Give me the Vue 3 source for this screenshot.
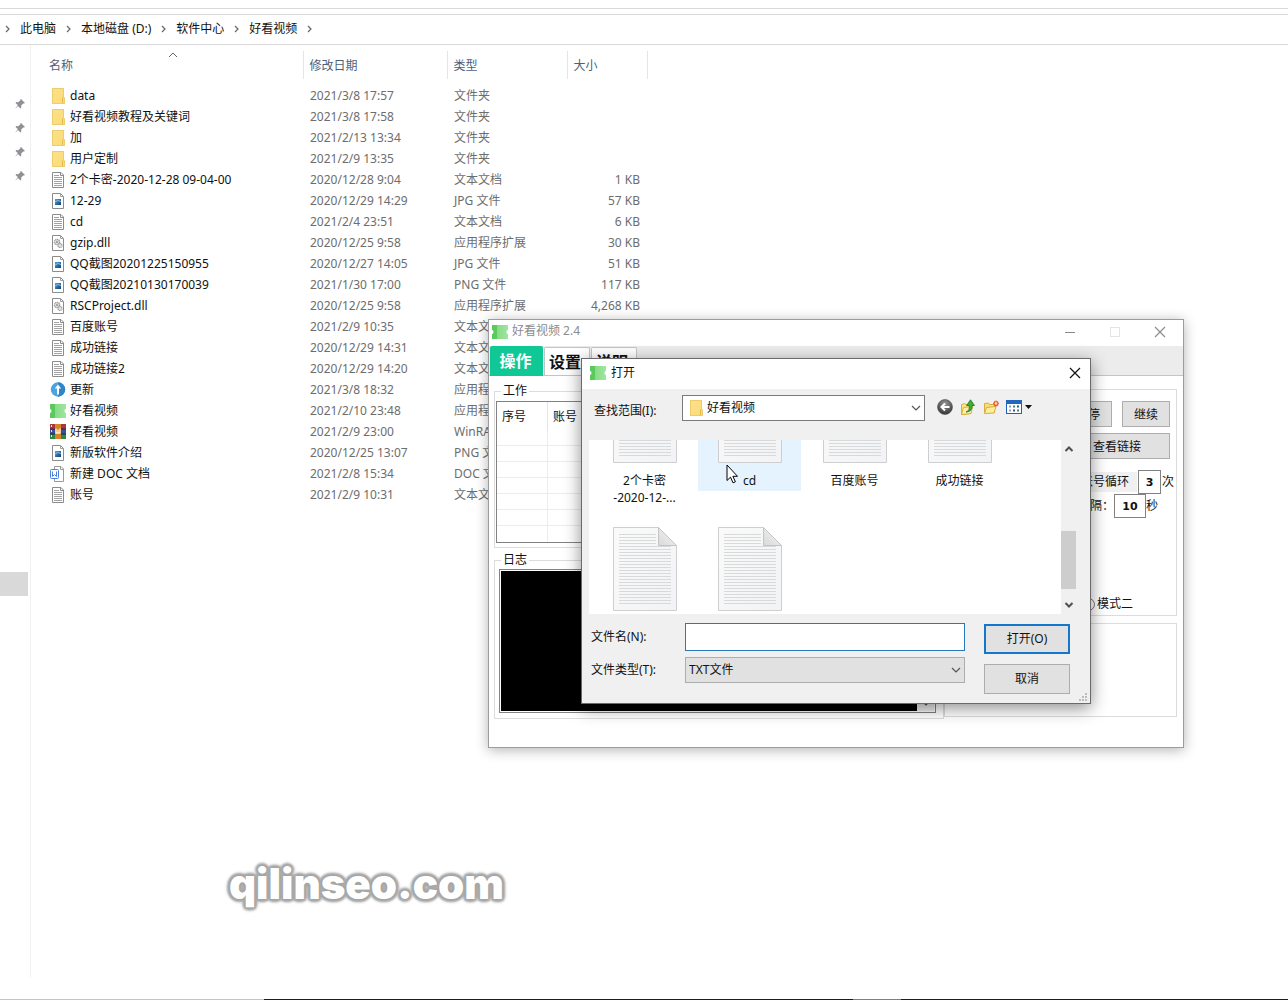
<script setup>
import { ref } from 'vue'

const crumbs = ['此电脑', '本地磁盘 (D:)', '软件中心', '好看视频']

const files = [
  { icon: 'folder', name: 'data', date: '2021/3/8 17:57', type: '文件夹', size: '' },
  { icon: 'folder', name: '好看视频教程及关键词', date: '2021/3/8 17:58', type: '文件夹', size: '' },
  { icon: 'folder', name: '加', date: '2021/2/13 13:34', type: '文件夹', size: '' },
  { icon: 'folder', name: '用户定制', date: '2021/2/9 13:35', type: '文件夹', size: '' },
  { icon: 'text', name: '2个卡密-2020-12-28 09-04-00', date: '2020/12/28 9:04', type: '文本文档', size: '1 KB' },
  { icon: 'image', name: '12-29', date: '2020/12/29 14:29', type: 'JPG 文件', size: '57 KB' },
  { icon: 'text', name: 'cd', date: '2021/2/4 23:51', type: '文本文档', size: '6 KB' },
  { icon: 'dll', name: 'gzip.dll', date: '2020/12/25 9:58', type: '应用程序扩展', size: '30 KB' },
  { icon: 'image', name: 'QQ截图20201225150955', date: '2020/12/27 14:05', type: 'JPG 文件', size: '51 KB' },
  { icon: 'image', name: 'QQ截图20210130170039', date: '2021/1/30 17:00', type: 'PNG 文件', size: '117 KB' },
  { icon: 'dll', name: 'RSCProject.dll', date: '2020/12/25 9:58', type: '应用程序扩展', size: '4,268 KB' },
  { icon: 'text', name: '百度账号', date: '2021/2/9 10:35', type: '文本文档', size: '' },
  { icon: 'text', name: '成功链接', date: '2020/12/29 14:31', type: '文本文档', size: '' },
  { icon: 'text', name: '成功链接2', date: '2020/12/29 14:20', type: '文本文档', size: '' },
  { icon: 'update', name: '更新', date: '2021/3/8 18:32', type: '应用程序', size: '' },
  { icon: 'app', name: '好看视频', date: '2021/2/10 23:48', type: '应用程序', size: '' },
  { icon: 'rar', name: '好看视频', date: '2021/2/9 23:00', type: 'WinRAR', size: '' },
  { icon: 'image', name: '新版软件介绍', date: '2020/12/25 13:07', type: 'PNG 文件', size: '' },
  { icon: 'doc', name: '新建 DOC 文档', date: '2021/2/8 15:34', type: 'DOC 文档', size: '' },
  { icon: 'text', name: '账号', date: '2021/2/9 10:31', type: '文本文档', size: '' },
]

const picks = [
  { label: ['2个卡密', '-2020-12-...'] },
  { label: ['cd'], hover: true },
  { label: ['百度账号'] },
  { label: ['成功链接'] },
  { label: [] },
  { label: [] },
]

const fileName = ref('')
const loops = ref('3')
const pause = ref('10')
</script>

<template>
  <svg class="defs" aria-hidden="true">
    <defs>
      <linearGradient id="gFolder" x1="0" y1="0" x2="1" y2="1">
        <stop offset="0" stop-color="#fbe08c" />
        <stop offset="1" stop-color="#fddc74" />
      </linearGradient>
      <linearGradient id="gPaper" x1="0" y1="0" x2="1" y2="1">
        <stop offset="0" stop-color="#fafafa" />
        <stop offset="1" stop-color="#f2f3f5" />
      </linearGradient>
      <linearGradient id="gFold" x1="0" y1="1" x2="1" y2="0">
        <stop offset="0" stop-color="#d9d9d9" />
        <stop offset="1" stop-color="#f6f6f6" />
      </linearGradient>
      <linearGradient id="gPic" x1="0" y1="0" x2="1" y2="1">
        <stop offset="0" stop-color="#4aa3dc" />
        <stop offset="1" stop-color="#10407c" />
      </linearGradient>
      <linearGradient id="gApp" x1="0" y1="0" x2="1" y2="0">
        <stop offset="0" stop-color="#86dc86" />
        <stop offset="1" stop-color="#9fe69f" />
      </linearGradient>
      <radialGradient id="gBack" cx=".5" cy=".3" r=".7">
        <stop offset="0" stop-color="#9a9a9a" />
        <stop offset="1" stop-color="#333" />
      </radialGradient>
      <symbol id="i-folder" viewBox="0 0 16 16">
        <path d="M2 0h12v10h1v6H2z" fill="url(#gFolder)" />
        <path d="M2.500.500h11v9h1v6h-12z" fill="none" stroke="#edcc6c" />
        <path d="M12.500 9.500v5.500" stroke="#e3b94f" fill="none" />
      </symbol>
      <symbol id="i-text" viewBox="0 0 16 16">
        <path d="M2.500.500h8.500l2.500 2.500v12.500h-11z" fill="#fff" stroke="#8b8b8b" />
        <path d="M10.500.500v3h3" fill="none" stroke="#8b8b8b" />
        <path d="M4 3.500h5M4 5.500h8M4 7.500h8M4 9.500h8M4 11.500h8M4 13.500h8" stroke="#a2a2a2" />
      </symbol>
      <symbol id="i-image" viewBox="0 0 16 16">
        <path d="M2.500.500h8l3 3v12h-11z" fill="#fff" stroke="#8b8b8b" />
        <path d="M10.500.500v3h3" fill="none" stroke="#a0a0a0" />
        <rect x="5" y="6" width="6" height="6" fill="url(#gPic)" />
        <path d="M5 9l3-1.500 3 1" stroke="#9fd0ee" fill="none" stroke-width=".8" />
      </symbol>
      <symbol id="i-dll" viewBox="0 0 16 16">
        <path d="M2.500.500h8l3 3v12h-11z" fill="#fff" stroke="#8b8b8b" />
        <path d="M10.500.500v3h3" fill="none" stroke="#a0a0a0" />
        <circle cx="7" cy="7" r="2.600" fill="#e6e6e6" stroke="#999" stroke-dasharray="1.200 .5" stroke-width="1.400" />
        <circle cx="10" cy="10.500" r="2" fill="#e6e6e6" stroke="#999" stroke-dasharray="1 .4" stroke-width="1.200" />
        <circle cx="7" cy="7" r=".9" fill="#888" />
      </symbol>
      <symbol id="i-update" viewBox="0 0 16 16">
        <circle cx="8" cy="7.500" r="7.200" fill="#4aa5df" />
        <path d="M8 .3a7.200 7.200 0 0 1 0 14.400z" fill="#2f86c4" />
        <path d="M8 2.500L4.800 6.500h2.200v6h2v-6h2.200z" fill="#fff" />
      </symbol>
      <symbol id="i-app" viewBox="0 0 16 16">
        <path d="M0 1h5v14H0v-5a1.500 2 0 0 0 0-4z" fill="#5cc95c" />
        <path d="M5 1h11v5a1.500 2 0 0 0 0 4v5H5z" fill="url(#gApp)" />
      </symbol>
      <symbol id="i-rar" viewBox="0 0 16 16">
        <rect width="16" height="5" fill="#a53a3a" />
        <rect width="16" height="5" y="5" fill="#39509c" />
        <rect width="16" height="5" y="10" fill="#2f8746" />
        <path d="M0 5h16M0 10h16" stroke="#2a2340" />
        <rect x="5" width="6" height="15" fill="#d9822b" />
        <path d="M6 4.500v4.500h4V4.500M8 5.500v3.500" fill="none" stroke="#fff3d0" stroke-width="1.300" />
        <path d="M1.500 1v2M1.500 6v2M1.500 11v2" stroke="#f0e8d0" />
      </symbol>
      <symbol id="i-doc" viewBox="0 0 16 16">
        <path d="M4.500.500h6.500l2.500 2.500v12.500h-9z" fill="#fff" stroke="#9a9a9a" />
        <path d="M10.500.500v3h3" fill="none" stroke="#9a9a9a" />
        <rect x=".5" y="3.500" width="8" height="9" rx="1" fill="#fff" stroke="#4c7fd8" />
        <path d="M2.500 5.500v5l2-2 2 2v-5" stroke="#4c7fd8" fill="none" />
      </symbol>
      <symbol id="i-page" viewBox="0 0 64 84">
        <path d="M.5.500h45l18 18v65H.5z" fill="url(#gPaper)" stroke="#cfcfd2" />
        <path d="M6 7.500h37M6 10.500h37M6 13.500h37M6 16.500h37M6 19.500h52M6 22.500h52M6 25.500h52M6 28.500h52M6 31.500h52M6 34.500h52M6 37.500h52M6 40.500h52M6 43.500h52M6 46.500h52M6 49.500h52M6 52.500h52M6 55.500h52M6 58.500h52M6 61.500h52M6 64.500h52M6 67.500h52M6 70.500h52M6 73.500h52M6 76.500h52" stroke="#d8d9db" />
        <path d="M45.500.500v18h18z" fill="url(#gFold)" stroke="#c4c4c4" />
      </symbol>
      <symbol id="i-pin" viewBox="0 0 12 12">
        <path d="M7 1l4 4-1 .6-.8-.1-2 2 .1 2-.9.9-2.400-2.400L1 11l2.800-3.900L1.500 5l.9-.9 2 .1 2-2-.1-.6z" fill="#8d9196" />
      </symbol>
      <symbol id="i-down" viewBox="0 0 10 6">
        <path d="M1 1l4 4 4-4" fill="none" stroke="#555" stroke-width="1.200" />
      </symbol>
      <symbol id="i-close" viewBox="0 0 12 12">
        <path d="M1 1l10 10M11 1L1 11" fill="none" stroke="currentColor" stroke-width="1.200" />
      </symbol>
    </defs>
  </svg>

  <main class="desktop">
    <section class="explorer">
      <div class="ribbon"></div>
      <nav class="address">
        <template v-for="c in crumbs" :key="c">
          <svg class="sep" viewBox="0 0 5 8"><path d="M1 1l3 3-3 3" /></svg>
          <a href="#">{{ c }}</a>
        </template>
        <svg class="sep" viewBox="0 0 5 8"><path d="M1 1l3 3-3 3" /></svg>
      </nav>

      <div class="panes">
        <aside class="tree">
          <svg v-for="n in 4" :key="n" class="pin"><use href="#i-pin" /></svg>
          <div class="tree-selected"></div>
        </aside>
        <table class="files">
          <thead>
            <tr>
              <th class="c-name">
                <svg class="sort" viewBox="0 0 10 6"><path d="M1 5l4-4 4 4" /></svg>名称
              </th>
              <th class="c-date">修改日期</th>
              <th class="c-type">类型</th>
              <th class="c-size">大小</th>
            </tr>
          </thead>
          <tbody>
            <tr v-for="(f, i) in files" :key="i">
              <td class="c-name">
                <div class="entry">
                  <svg class="ico"><use :href="'#i-' + f.icon" /></svg>
                  <span>{{ f.name }}</span>
                </div>
              </td>
              <td>{{ f.date }}</td>
              <td>{{ f.type }}</td>
              <td class="size">{{ f.size }}</td>
            </tr>
          </tbody>
        </table>
      </div>
      <div class="taskbar"></div>
    </section>

    <p class="watermark">qilinseo.com</p>

    <section class="window tool">
      <header class="tool-title">
        <svg class="ico"><use href="#i-app" /></svg>
        <h1>好看视频 2.4</h1>
        <svg class="win-btn" viewBox="0 0 12 12"><path d="M1 6.500h10" stroke="#888" /></svg>
        <svg class="win-btn" viewBox="0 0 12 12"><rect x="1.500" y="1.500" width="9" height="9" fill="none" stroke="#e4e4e4" /></svg>
        <svg class="win-btn"><use href="#i-close" /></svg>
      </header>
      <div class="tabs">
        <button class="tab active">操作</button>
        <button class="tab">设置</button>
        <button class="tab">说明</button>
      </div>
      <div class="tool-body">
        <div class="left">
          <fieldset class="work">
            <legend>工作</legend>
            <table class="jobs">
              <thead>
                <tr><th class="no">序号</th><th>账号</th></tr>
              </thead>
              <tbody>
                <tr v-for="n in 7" :key="n"><td></td><td></td></tr>
              </tbody>
            </table>
          </fieldset>
          <fieldset class="log">
            <legend>日志</legend>
            <div class="console">
              <div class="console-text"></div>
              <div class="console-bar"><svg class="chev"><use href="#i-down" /></svg></div>
            </div>
          </fieldset>
        </div>
        <div class="right">
          <div class="panel controls">
            <div class="line">
              <button class="btn small">暂停</button>
              <button class="btn small">继续</button>
            </div>
            <div class="line">
              <button class="btn wide">查看链接</button>
            </div>
            <div class="line loops">
              <label for="loops" class="shade">账号循环</label>
              <input id="loops" v-model="loops" class="num n3" />
              <span>次</span>
            </div>
            <div class="line gap">
              <label for="pause">间隔：</label>
              <input id="pause" v-model="pause" class="num n10" />
              <span>秒</span>
            </div>
            <label class="line mode"><input type="radio" name="mode" />模式二</label>
          </div>
          <div class="panel extra"></div>
        </div>
      </div>
    </section>

    <section class="window dialog" role="dialog">
      <header class="dialog-title">
        <svg class="ico"><use href="#i-app" /></svg>
        <h2>打开</h2>
        <svg class="win-btn"><use href="#i-close" /></svg>
      </header>
      <div class="lookup">
        <label for="lookin">查找范围(I):</label>
        <div class="combo white">
          <svg class="ico"><use href="#i-folder" /></svg>
          <select id="lookin"><option>好看视频</option></select>
          <svg class="chev"><use href="#i-down" /></svg>
        </div>
        <div class="tools">
          <svg class="ico" viewBox="0 0 16 16">
            <circle cx="8" cy="8" r="7.500" fill="url(#gBack)" stroke="#555" stroke-width=".6" />
            <path d="M12.500 8H5M8 4.500L4.500 8 8 11.500" fill="none" stroke="#fff" stroke-width="2" />
          </svg>
          <svg class="ico" viewBox="0 0 16 16">
            <path d="M1.500 5.500l3-1 1.500 1h5v9l-9.500 1z" fill="#fbe58a" stroke="#d8b23c" />
            <path d="M3.500 8.500l9-1-1.500 7-9.500 1z" fill="#fdf0a8" stroke="#d8b23c" />
            <path d="M6 13c3-1 3.500-3 3.300-6.500H6.600L10.500.8l4 5.700H12c.3 3.500-1 6-6 6.500z" fill="#3fae3a" stroke="#1d7420" stroke-width=".8" />
          </svg>
          <svg class="ico" viewBox="0 0 16 16">
            <path d="M1.500 4.500l4-.500 1 1.500h5v8h-10z" fill="#f9dd7c" stroke="#dcab3c" />
            <path d="M3.500 8.500l9.500-1-2 6.500-9.500.5z" fill="#fdeea2" stroke="#dcab3c" />
            <path d="M13 1.500v6M10 4.500h6M11 2.500l4 4M15 2.500l-4 4" stroke="#ef5a2a" stroke-width="1.300" />
            <circle cx="13" cy="4.500" r="1.200" fill="#ffe9c8" />
          </svg>
          <svg class="ico" viewBox="0 0 16 16">
            <rect x=".5" y="1.500" width="15" height="13" fill="#fff" stroke="#1f62b5" />
            <rect x="0" y="1" width="16" height="4" fill="#2268bd" />
            <path d="M3 7.500h2M3 11.500h2" stroke="#8ba3c8" stroke-width="2" />
            <path d="M7 7.500h2M11 11.500h2" stroke="#3d8f72" stroke-width="2" />
            <path d="M11 7.500h2M7 11.500h2" stroke="#2c57a8" stroke-width="2" />
          </svg>
          <svg class="tri" viewBox="0 0 7 4"><path d="M0 0h7L3.500 4z" fill="#111" /></svg>
        </div>
      </div>

      <div class="browser">
        <ul class="grid">
          <li v-for="(p, i) in picks" :key="i" :class="{ hover: p.hover }">
            <svg class="page"><use href="#i-page" /></svg>
            <span v-for="l in p.label" :key="l">{{ l }}</span>
          </li>
        </ul>
        <div class="scroll">
          <svg viewBox="0 0 10 8"><path d="M1.500 6L5 2.500 8.500 6" /></svg>
          <div class="thumb"></div>
          <svg viewBox="0 0 10 8"><path d="M1.500 2L5 5.500 8.500 2" /></svg>
        </div>
      </div>

      <div class="form">
        <div class="fields">
          <div class="field">
            <label for="fname">文件名(N):</label>
            <input id="fname" v-model="fileName" type="text" />
          </div>
          <div class="field">
            <label for="ftype">文件类型(T):</label>
            <div class="combo">
              <select id="ftype"><option>TXT文件</option></select>
              <svg class="chev"><use href="#i-down" /></svg>
            </div>
          </div>
        </div>
        <div class="actions">
          <button class="btn primary">打开(O)</button>
          <button class="btn">取消</button>
        </div>
      </div>
      <svg class="grip" viewBox="0 0 9 9">
        <path d="M6 0h2v2H6zM6 3h2v2H6zM3 3h2v2H3zM6 6h2v2H6zM3 6h2v2H3zM0 6h2v2H0z" fill="#bcbcbc" />
      </svg>
      <svg class="cursor" viewBox="0 0 12 20">
        <path d="M1 1v15.500l3.500-3.300 2.500 5.600 2.400-1-2.500-5.500h4.600z" fill="#fff" stroke="#000" />
      </svg>
    </section>
  </main>
</template>

<style>
body {
  margin: 0;
  background: #fff;
}
</style>

<style scoped>
.defs {
  position: absolute;
  width: 0;
  height: 0;
}
.desktop {
  position: relative;
  min-height: 100vh;
  overflow: hidden;
  font-family: "Noto Sans", "Noto Sans CJK SC", sans-serif;
  font-size: 12px;
  line-height: 16px;
  color: #111;
}
.desktop * {
  box-sizing: border-box;
}
button, input, select {
  font: inherit;
  color: inherit;
  margin: 0;
}
h1, h2, p, ul {
  margin: 0;
  padding: 0;
  font: inherit;
}
.ico {
  flex: none;
  width: 16px;
  height: 16px;
}
.chev {
  flex: none;
  width: 10px;
  height: 6px;
  pointer-events: none;
}

/* Explorer */
.explorer {
  display: flex;
  flex-direction: column;
  min-height: 100vh;
}
.ribbon {
  height: 9px;
  border-bottom: 1px solid #d9d9d9;
}
.address {
  display: flex;
  align-items: center;
  gap: 10px;
  height: 31px;
  margin-top: 5px;
  padding: 0 5px 2px;
  border: solid #d9d9d9;
  border-width: 1px 0;
}
.address a {
  color: #111;
  text-decoration: none;
  white-space: nowrap;
}
.sep {
  width: 5px;
  height: 8px;
}
.sep path {
  fill: none;
  stroke: #666;
  stroke-width: 1.2;
}
.panes {
  flex: 1;
  display: flex;
  align-items: flex-start;
}
.tree {
  display: flex;
  flex-direction: column;
  gap: 12px;
  width: 31px;
  height: 932px;
  padding-top: 53px;
  border-right: 1px solid #f0f0f0;
}
.pin {
  width: 12px;
  height: 12px;
  margin-left: 14px;
}
.tree-selected {
  width: 28px;
  height: 24px;
  margin-top: 378px;
  background: #d9d9d9;
}
.files {
  table-layout: fixed;
  width: 616px;
  margin-top: 6px;
  border-collapse: collapse;
  color: #6d6d6d;
}
.files th {
  position: relative;
  height: 28px;
  padding: 2px 0 0 6px;
  border-right: 1px solid #e5e5e5;
  color: #4c607a;
  font-weight: 400;
  text-align: left;
}
.files th.c-name {
  width: 272px;
  padding-left: 18px;
}
.c-date { width: 144px; }
.c-type { width: 120px; }
.c-size { width: 80px; }
.sort {
  position: absolute;
  top: 1px;
  left: 137px;
  width: 10px;
  height: 6px;
}
.sort path {
  fill: none;
  stroke: #666;
}
.files tbody::before {
  content: "";
  display: block;
  height: 6px;
}
.files td {
  height: 21px;
  padding: 0 0 0 7px;
  white-space: nowrap;
}
.files td.c-name {
  padding-left: 19px;
  color: #111;
}
.files td.size {
  padding: 0 7px 0 0;
  text-align: right;
}
.entry {
  display: flex;
  align-items: center;
  gap: 4px;
}
.taskbar {
  height: 1px;
  background: linear-gradient(90deg, #c4c4c4 264px, #1c1c1c 264px, #1c1c1c 853px, #8d7a74 853px, #8d7a74 901px, #1c1c1c 901px);
}
.watermark {
  position: absolute;
  left: 229px;
  top: 859px;
  color: #fff;
  font-family: Inter, "Liberation Sans", sans-serif;
  font-size: 42px;
  font-weight: 900;
  line-height: 50px;
  text-shadow: 0 0 2px #999, 2px 2px 2px #aaa, -2px -2px 2px #aaa, 2px -2px 2px #aaa, -2px 2px 2px #aaa, 0 3px 3px #aaa, 0 -3px 3px #aaa, 3px 0 3px #aaa, -3px 0 3px #aaa;
}

/* Tool window */
.window {
  position: absolute;
  display: flex;
  flex-direction: column;
}
.tool {
  left: 488px;
  top: 319px;
  width: 696px;
  border: 1px solid #9c9c9c;
  background: #fff;
  box-shadow: 0 2px 12px rgba(0, 0, 0, .3);
}
.tool-title {
  display: flex;
  align-items: center;
  height: 26px;
  padding: 0 17px 2px 3px;
  color: #8c8c8c;
}
.tool-title h1 {
  flex: 1;
  padding: 0 4px 2px;
}
.win-btn {
  width: 12px;
  height: 12px;
  margin-left: 33px;
}
.tabs {
  display: flex;
  align-items: flex-end;
  gap: 1px;
  height: 30px;
  padding-left: 1px;
  border-bottom: 1px solid #c4c4c4;
  background: #ececec;
}
.tab {
  height: 28px;
  width: 46px;
  padding: 0 4px 0 0;
  border: 1px solid #c4c4c4;
  border-bottom: 0;
  border-radius: 2px 2px 0 0;
  background: #fff;
  font-size: 16px;
  font-weight: 700;
  white-space: nowrap;
}
.tab.active {
  width: 53px;
  height: 30px;
  padding: 0 2px 0 0;
  margin-bottom: -1px;
  border: 0;
  background: #0fc896;
  color: #fff;
}
.tool-body {
  display: flex;
  justify-content: space-between;
  height: 371px;
  padding: 5px 6px 28px 5px;
}
.left {
  display: flex;
  flex-direction: column;
  gap: 4px;
  width: 450px;
  padding-top: 2px;
}
.right {
  display: flex;
  flex-direction: column;
  gap: 7px;
  flex: 1;
  padding: 8px 0 2px;
}
fieldset {
  min-width: 0;
  margin: 0;
  padding: 0;
  border: 1px solid #dcdcdc;
}
legend {
  margin-left: 6px;
  padding: 0 2px;
  color: #111;
}
.work {
  height: 165px;
}
.jobs {
  width: 446px;
  margin: 2px 1px 0;
  border: 1px solid #828282;
  border-spacing: 0;
}
.jobs th {
  height: 28px;
  padding: 1px 5px 0;
  border-right: 1px solid #e5e5e5;
  font-weight: 400;
  text-align: left;
}
.jobs .no {
  width: 51px;
}
.jobs td {
  height: 16px;
  padding: 0;
  border-right: 1px solid #ececec;
  border-bottom: 1px solid #ececec;
}
.jobs tbody tr:last-child td {
  border-bottom: 0;
}
.log {
  flex: 1;
}
.console {
  display: flex;
  width: 437px;
  height: 144px;
  margin: 1px 4px 0;
  padding: 1px;
  border: 1px solid #828282;
}
.console-text {
  flex: 1;
  background: #000;
}
.console-bar {
  display: flex;
  align-items: flex-end;
  justify-content: center;
  width: 17px;
  padding-bottom: 5px;
  background: #f0f0f0;
}
.panel {
  border: 1px solid #dcdcdc;
}
.controls {
  height: 227px;
  padding: 11px 6px 0 0;
}
.line {
  display: flex;
  align-items: center;
  justify-content: flex-end;
  gap: 10px;
  margin-bottom: 6px;
  white-space: nowrap;
}
.btn {
  padding: 0;
  border: 1px solid #adadad;
  background: #e1e1e1;
  text-align: center;
}
.small,
.wide {
  height: 26px;
  padding-top: 2px;
}
.small {
  width: 48px;
}
.wide {
  width: 106px;
}
.loops,
.gap {
  gap: 0;
  margin-bottom: 0;
}
.loops {
  margin: 11px -4px 0 0;
  gap: 1px;
}
.gap {
  margin-right: 12px;
}
.shade {
  padding: 2px 8px;
  background: #f0f0f0;
}
.num {
  height: 24px;
  padding: 0;
  border: 1px solid #828282;
  background: #fff;
  font-family: "DejaVu Sans", sans-serif;
  font-size: 11px;
  font-weight: 700;
  text-align: center;
}
.n3 { width: 23px; }
.n10 { width: 32px; }
.mode {
  margin: 78px 37px 0 0;
  gap: 2px;
}
.mode input {
  width: 13px;
  height: 13px;
}
.extra {
  flex: 1;
}

/* File picker */
.dialog {
  left: 581px;
  top: 358px;
  width: 510px;
  border: 1px solid #6a6a6a;
  background: #f0f0f0;
  box-shadow: 0 4px 16px rgba(0, 0, 0, .45);
}
.dialog-title {
  display: flex;
  align-items: center;
  height: 30px;
  padding: 0 9px 2px 8px;
  background: #fff;
}
.dialog-title h2 {
  flex: 1;
  padding: 0 5px;
}
.lookup {
  display: flex;
  align-items: center;
  height: 51px;
  padding: 0 14px 13px 12px;
}
.lookup label {
  width: 88px;
  padding-top: 6px;
}
.combo {
  display: flex;
  align-items: center;
  height: 26px;
  padding-right: 3px;
  border: 1px solid #adadad;
  background: #e1e1e1;
}
.combo.white {
  width: 243px;
  padding-left: 5px;
  border-color: #7a7a7a;
  background: #fff;
}
.combo select {
  flex: 1;
  min-width: 0;
  padding: 0 3px;
  border: 0;
  outline: 0;
  appearance: none;
  background: transparent;
}
.tools {
  display: flex;
  align-items: center;
  gap: 7px;
  margin-left: 12px;
  padding-bottom: 3px;
}
.tri {
  width: 7px;
  height: 4px;
  margin-left: -4px;
}
.browser {
  display: flex;
  height: 174px;
  margin: 0 14px 0 7px;
  overflow: hidden;
}
.grid {
  flex: 1;
  display: grid;
  grid-template-columns: repeat(4, 103px);
  grid-template-rows: 148px 87px;
  column-gap: 2px;
  align-content: end;
  padding-left: 4px;
  background: #fff;
  list-style: none;
}
.grid li {
  display: flex;
  flex-direction: column;
  align-items: center;
  align-self: start;
  line-height: 17px;
}
.grid li.hover {
  padding-bottom: 2px;
  background: #e5f3ff;
}
.page {
  width: 64px;
  height: 84px;
  margin-bottom: 9px;
}
.scroll {
  display: flex;
  flex-direction: column;
  align-items: center;
  justify-content: space-between;
  width: 15px;
  padding: 5px 0;
}
.scroll svg {
  width: 10px;
  height: 8px;
}
.scroll path {
  fill: none;
  stroke: #505050;
  stroke-width: 2;
}
.thumb {
  width: 15px;
  height: 58px;
  margin-top: 65px;
  background: #cdcdcd;
}
.form {
  display: flex;
  justify-content: space-between;
  padding: 9px 20px 9px 9px;
}
.fields {
  display: flex;
  flex-direction: column;
  gap: 6px;
}
.field {
  display: flex;
  align-items: center;
}
.field label {
  width: 94px;
}
.field input {
  width: 280px;
  height: 28px;
  padding: 0 4px;
  border: 1px solid #2a78b8;
  outline: 0;
  background: #fff;
}
.field .combo {
  width: 280px;
}
.actions {
  display: flex;
  flex-direction: column;
  gap: 10px;
  padding-top: 1px;
}
.actions .btn {
  width: 86px;
  height: 30px;
}
.actions .primary {
  border: 2px solid #1577cc;
}
.grip {
  position: absolute;
  right: 2px;
  bottom: 1px;
  width: 9px;
  height: 9px;
}
.cursor {
  position: absolute;
  left: 144px;
  top: 105px;
  width: 12px;
  height: 20px;
}
</style>
